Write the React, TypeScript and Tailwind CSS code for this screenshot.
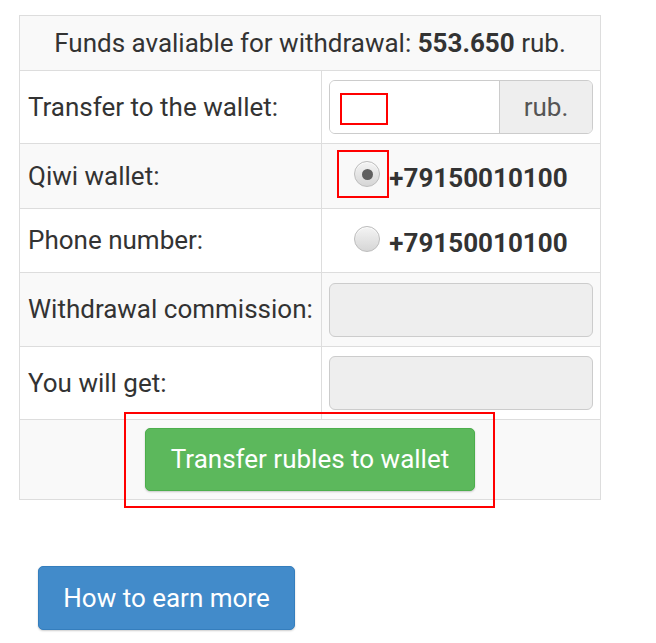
function Radio({ checked }: { checked?: boolean }) {
  return (
    <span className="relative inline-flex h-[26px] w-[26px] shrink-0 items-center justify-center rounded-full border border-[#bdbdbd] bg-gradient-to-b from-[#f4f4f4] to-[#d6d6d6] shadow-[inset_0_1px_1px_rgba(255,255,255,0.8)]">
      {checked && <span className="h-[11px] w-[11px] rounded-full bg-[#5f5f5f]" />}
    </span>
  )
}

export default function App() {
  const cell = 'border border-[#dddddd] align-middle'
  const left = `${cell} pl-2 pr-1 whitespace-nowrap`
  const right = `${cell} px-[7px]`
  return (
    <div className="min-h-[643px] w-[656px] bg-white pl-[19px] pt-[15px] font-['Roboto','Liberation_Sans',sans-serif] text-[26px] text-[#333333]">
      <table className="w-[582px] table-fixed border-collapse">
        <colgroup>
          <col className="w-[302px]" />
          <col />
        </colgroup>
        <tbody>
          <tr className="h-[55px] bg-[#f9f9f9]">
            <td colSpan={2} className={`${cell} whitespace-nowrap text-center`}>
              Funds avaliable for withdrawal: <b className="font-bold">553.650</b> rub.
            </td>
          </tr>
          <tr className="h-[73px] bg-white">
            <td className={left}>Transfer to the wallet:</td>
            <td className={right}>
              <div className="relative flex h-[54px] overflow-hidden rounded-[6px] border border-[#cccccc] shadow-[inset_0_1px_1px_rgba(0,0,0,0.08)]">
                <div className="flex-1 bg-white" />
                <div className="flex w-[93px] items-center justify-center border-l border-[#cccccc] bg-[#eeeeee] text-[#555555]">
                  rub.
                </div>
                <span className="absolute left-[10px] top-[12px] h-[32px] w-[48px] border-2 border-[#ff0000]" />
              </div>
            </td>
          </tr>
          <tr className="h-[65px] bg-[#f9f9f9]">
            <td className={left}>Qiwi wallet:</td>
            <td className={right}>
              <div className="flex items-center justify-center gap-[9px] pt-[4px]">
                <span className="relative -mt-[8px] inline-flex">
                  <Radio checked />
                  <span className="absolute -left-[17px] -top-[11px] h-[48px] w-[52px] border-2 border-[#ff0000]" />
                </span>
                <b className="font-bold leading-none">+79150010100</b>
              </div>
            </td>
          </tr>
          <tr className="h-[64px] bg-white">
            <td className={left}>Phone number:</td>
            <td className={right}>
              <div className="flex items-center justify-center gap-[9px] pt-[4px]">
                <span className="-mt-[8px] inline-flex">
                  <Radio />
                </span>
                <b className="font-bold leading-none">+79150010100</b>
              </div>
            </td>
          </tr>
          <tr className="h-[74px] bg-[#f9f9f9]">
            <td className={left}>Withdrawal commission:</td>
            <td className={right}>
              <div className="h-[54px] rounded-[6px] border border-[#cccccc] bg-[#eeeeee]" />
            </td>
          </tr>
          <tr className="h-[73px] bg-white">
            <td className={left}>You will get:</td>
            <td className={right}>
              <div className="h-[54px] rounded-[6px] border border-[#cccccc] bg-[#eeeeee]" />
            </td>
          </tr>
          <tr className="h-[80px] bg-[#f9f9f9]">
            <td colSpan={2} className={`${cell} text-center`}>
              <div className="flex justify-center">
                <div className="relative">
                  <button
                    type="button"
                    className="h-[63px] w-[330px] rounded-[5px] border border-[#4cae4c] bg-[#5cb85c] text-[26px] text-white shadow-[0_1px_2px_rgba(0,0,0,0.2)]"
                  >
                    Transfer rubles to wallet
                  </button>
                  <span className="absolute -bottom-[17px] -left-[21px] -right-[20px] -top-[16px] border-2 border-[#ff0000]" />
                </div>
              </div>
            </td>
          </tr>
        </tbody>
      </table>
      <div className="pl-[19px] pt-[66px]">
        <button
          type="button"
          className="h-[64px] w-[257px] rounded-[5px] border border-[#357ebd] bg-[#428bca] text-[26px] text-white shadow-[0_1px_2px_rgba(0,0,0,0.2)]"
        >
          How to earn more
        </button>
      </div>
    </div>
  )
}
